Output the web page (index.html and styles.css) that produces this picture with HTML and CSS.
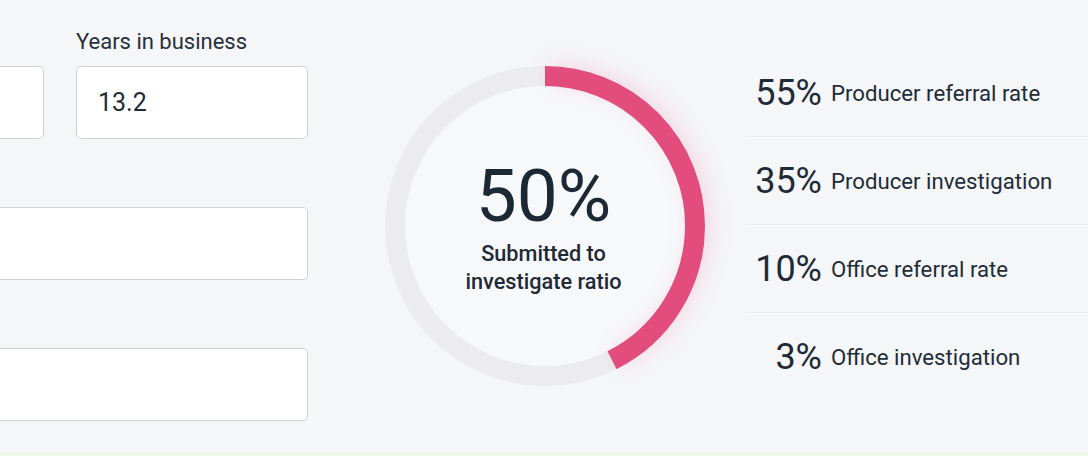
FILE: index.html
```html
<!DOCTYPE html>
<html lang="en">
<head>
<meta charset="utf-8">
<title>Submitted to investigate ratio</title>
<link rel="stylesheet" href="styles.css">
</head>
<body>
<div class="page">
  <main class="content">
    <section class="form">
      <div class="field">
        <label class="label"></label>
        <div class="input"></div>
      </div>
      <div class="field">
        <label class="label">Years in business</label>
        <div class="input">13.2</div>
      </div>
      <div class="field wide">
        <label class="label"></label>
        <div class="input"></div>
      </div>
      <div class="field wide">
        <label class="label"></label>
        <div class="input"></div>
      </div>
    </section>

    <section class="gauge">
      <svg class="ring" width="320" height="320" viewBox="0 0 320 320">
        <circle class="track" cx="160" cy="160" r="150"></circle>
        <circle class="arc" cx="160" cy="160" r="150" transform="rotate(-90 160 160)"></circle>
      </svg>
      <div class="gauge-text">
        <div class="gauge-value">50%</div>
        <div class="gauge-caption">Submitted to<br>investigate ratio</div>
      </div>
    </section>

    <section class="stats">
      <div class="stat"><span class="stat-num">55%</span><span class="stat-label">Producer referral rate</span></div>
      <div class="stat"><span class="stat-num">35%</span><span class="stat-label">Producer investigation</span></div>
      <div class="stat"><span class="stat-num">10%</span><span class="stat-label">Office referral rate</span></div>
      <div class="stat last"><span class="stat-num">3%</span><span class="stat-label">Office investigation</span></div>
    </section>
  </main>
  <div class="strip"></div>
</div>
</body>
</html>
```

FILE: styles.css
```css
* { box-sizing: border-box; }

html, body {
  margin: 0;
  padding: 0;
  width: 1088px;
  height: 456px;
  overflow: hidden;
  background: #f5f6f8;
  font-family: Roboto, "Liberation Sans", sans-serif;
  color: #1f2a36;
}

.page {
  display: flex;
  flex-direction: column;
  height: 456px;
}

.content {
  flex: 1;
  display: flex;
  align-items: flex-start;
}

.strip {
  height: 4px;
  background: #eef6e8;
}

/* Form */
.form {
  margin-left: -188px;
  width: 496px;
  flex: none;
  padding-top: 30px;
  display: grid;
  grid-template-columns: 232px 232px;
  column-gap: 32px;
  row-gap: 32px;
}

.field.wide { grid-column: 1 / span 2; }

.label {
  display: block;
  height: 24px;
  line-height: 24px;
  margin-bottom: 12px;
  font-size: 22px;
  color: #27313b;
  white-space: nowrap;
}

.input {
  height: 73px;
  background: #fff;
  border: 1.5px solid #cfd1d4;
  border-radius: 5px;
  padding: 0 21px;
  display: flex;
  align-items: center;
  font-size: 25px;
  color: #222c36;
}

/* Gauge */
.gauge {
  flex: none;
  margin-left: 77px;
  margin-top: 66px;
  width: 320px;
  height: 320px;
  display: grid;
  place-items: center;
}

.gauge > * { grid-area: 1 / 1; }

.ring { overflow: visible; }

.track {
  fill: #f7f8fa;
  stroke: #ececee;
  stroke-width: 20;
}

.arc {
  fill: none;
  stroke: #e34d7e;
  stroke-width: 20;
  stroke-dasharray: 401.5 942.5;
  filter: drop-shadow(3px 6px 10px rgba(227, 77, 126, 0.18));
}

.gauge-text {
  text-align: center;
  margin-left: -3px;
}

.gauge-value {
  font-size: 73px;
  line-height: 80px;
  font-weight: 400;
  color: #1c2833;
}

.gauge-caption {
  margin-top: 4px;
  font-size: 21.7px;
  line-height: 28px;
  font-weight: 500;
  color: #1f2a36;
}

/* Stats */
.stats {
  flex: 1;
  margin-left: 43px;
  margin-top: 49px;
  display: flex;
  flex-direction: column;
}

.stat {
  height: 88px;
  display: flex;
  align-items: center;
  border-bottom: 1px solid #e7e8eb;
  box-shadow: 0 1px 0 #ffffff;
}

.stat.last {
  border-bottom: none;
  box-shadow: none;
}

.stat-num {
  width: 74px;
  text-align: right;
  font-size: 36px;
  color: #1f2a36;
  margin-right: 9px;
}

.stat-label {
  font-size: 22.2px;
  color: #222c36;
  white-space: nowrap;
}
```
